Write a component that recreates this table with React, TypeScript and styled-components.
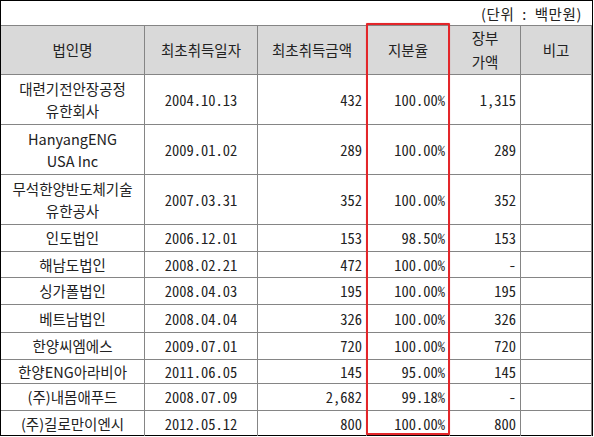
import React from 'react';
import styled, { createGlobalStyle } from 'styled-components';


const GlobalStyle = createGlobalStyle`
  body {
    margin: 0;
    background: #fff;
  }
`;

const LINE = '#858585';
const MONO = "'Noto Sans Mono CJK KR', 'Noto Sans CJK KR', sans-serif";

const Frame = styled.div`
  position: relative;
  width: 593px;
  height: 436px;
  box-sizing: border-box;
  border: 1px solid #000;
  font-family: 'Noto Sans CJK KR', sans-serif;
  font-size: 14.5px;
  color: #222;
`;

const Caption = styled.div`
  height: 24px;
  display: flex;
  align-items: center;
  justify-content: flex-end;
  padding-right: 10px;
  letter-spacing: 0.6px;
  word-spacing: 4px;
`;

const Grid = styled.div<{ $rows: string }>`
  display: grid;
  grid-template-columns: 144px 113px 109px 83px 71px 71px;
  grid-template-rows: ${ (p) => p.$rows };
  border-top: 1px solid ${ LINE };
`;

const Cell = styled.div<{ $align?: 'left' | 'center' | 'right'; $mono?: boolean; $last?: boolean }>`
  display: flex;
  align-items: center;
  justify-content: ${ (p) => (p.$align === 'right' ? 'flex-end' : 'center') };
  box-sizing: border-box;
  padding: 0 4px;
  border-right: 1px solid ${ LINE };
  border-bottom: ${ (p) => (p.$last ? 'none' : `1px solid ${ LINE }`) };
  text-align: center;
  white-space: pre-line;
  line-height: 22px;
  font-family: ${ (p) => (p.$mono ? MONO : 'inherit') };
`;

const HeadCell = styled(Cell)`
  background: #d9d9d9;
  line-height: 24px;
`;

const Highlight = styled.div`
  position: absolute;
  left: 365px;
  top: 22px;
  width: 84px;
  height: 412px;
  box-sizing: border-box;
  border: 2px solid #e3262a;
  border-radius: 1px;
  box-shadow: 0 0 1px rgba(227, 38, 42, 0.5);
  pointer-events: none;
`;


const heads = ['법인명', '최초취득일자', '최초취득금액', '지분율', '장부\n가액', '비고'];

const rows = [
  { name: '대련기전안장공정\n유한회사', date: '2004.10.13', amount: '432', ratio: '100.00%', book: '1,315', h: 50 },
  { name: 'HanyangENG\nUSA Inc', date: '2009.01.02', amount: '289', ratio: '100.00%', book: '289', h: 50 },
  { name: '무석한양반도체기술\n유한공사', date: '2007.03.31', amount: '352', ratio: '100.00%', book: '352', h: 50 },
  { name: '인도법인', date: '2006.12.01', amount: '153', ratio: '98.50%', book: '153', h: 27 },
  { name: '해남도법인', date: '2008.02.21', amount: '472', ratio: '100.00%', book: '-', h: 26 },
  { name: '싱가폴법인', date: '2008.04.03', amount: '195', ratio: '100.00%', book: '195', h: 27 },
  { name: '베트남법인', date: '2008.04.04', amount: '326', ratio: '100.00%', book: '326', h: 28 },
  { name: '한양씨엠에스', date: '2009.07.01', amount: '720', ratio: '100.00%', book: '720', h: 27 },
  { name: '한양ENG아라비아', date: '2011.06.05', amount: '145', ratio: '95.00%', book: '145', h: 24 },
  { name: '(주)내몸애푸드', date: '2008.07.09', amount: '2,682', ratio: '99.18%', book: '-', h: 27 },
  { name: '(주)길로만이엔시', date: '2012.05.12', amount: '800', ratio: '100.00%', book: '800', h: 25 },
];


const App = () => {
  const template = ['49px', ...rows.map((r) => `${ r.h }px`)].join(' ');

  return (
    <Frame>
      <GlobalStyle />
      <Caption>(단위 : 백만원)</Caption>
      <Grid $rows={ template }>
        { heads.map((h) => (
          <HeadCell key={ h }>{ h }</HeadCell>
        )) }
        { rows.map((r, i) => {
          const last = i === rows.length - 1;
          return (
            <React.Fragment key={ r.name }>
              <Cell $last={ last }>{ r.name }</Cell>
              <Cell $mono $last={ last }>{ r.date }</Cell>
              <Cell $mono $align='right' $last={ last }>{ r.amount }</Cell>
              <Cell $mono $align='right' $last={ last }>{ r.ratio }</Cell>
              <Cell $mono $align='right' $last={ last }>{ r.book }</Cell>
              <Cell $last={ last } />
            </React.Fragment>
          );
        }) }
      </Grid>
      <Highlight />
    </Frame>
  );
};


export default App;
